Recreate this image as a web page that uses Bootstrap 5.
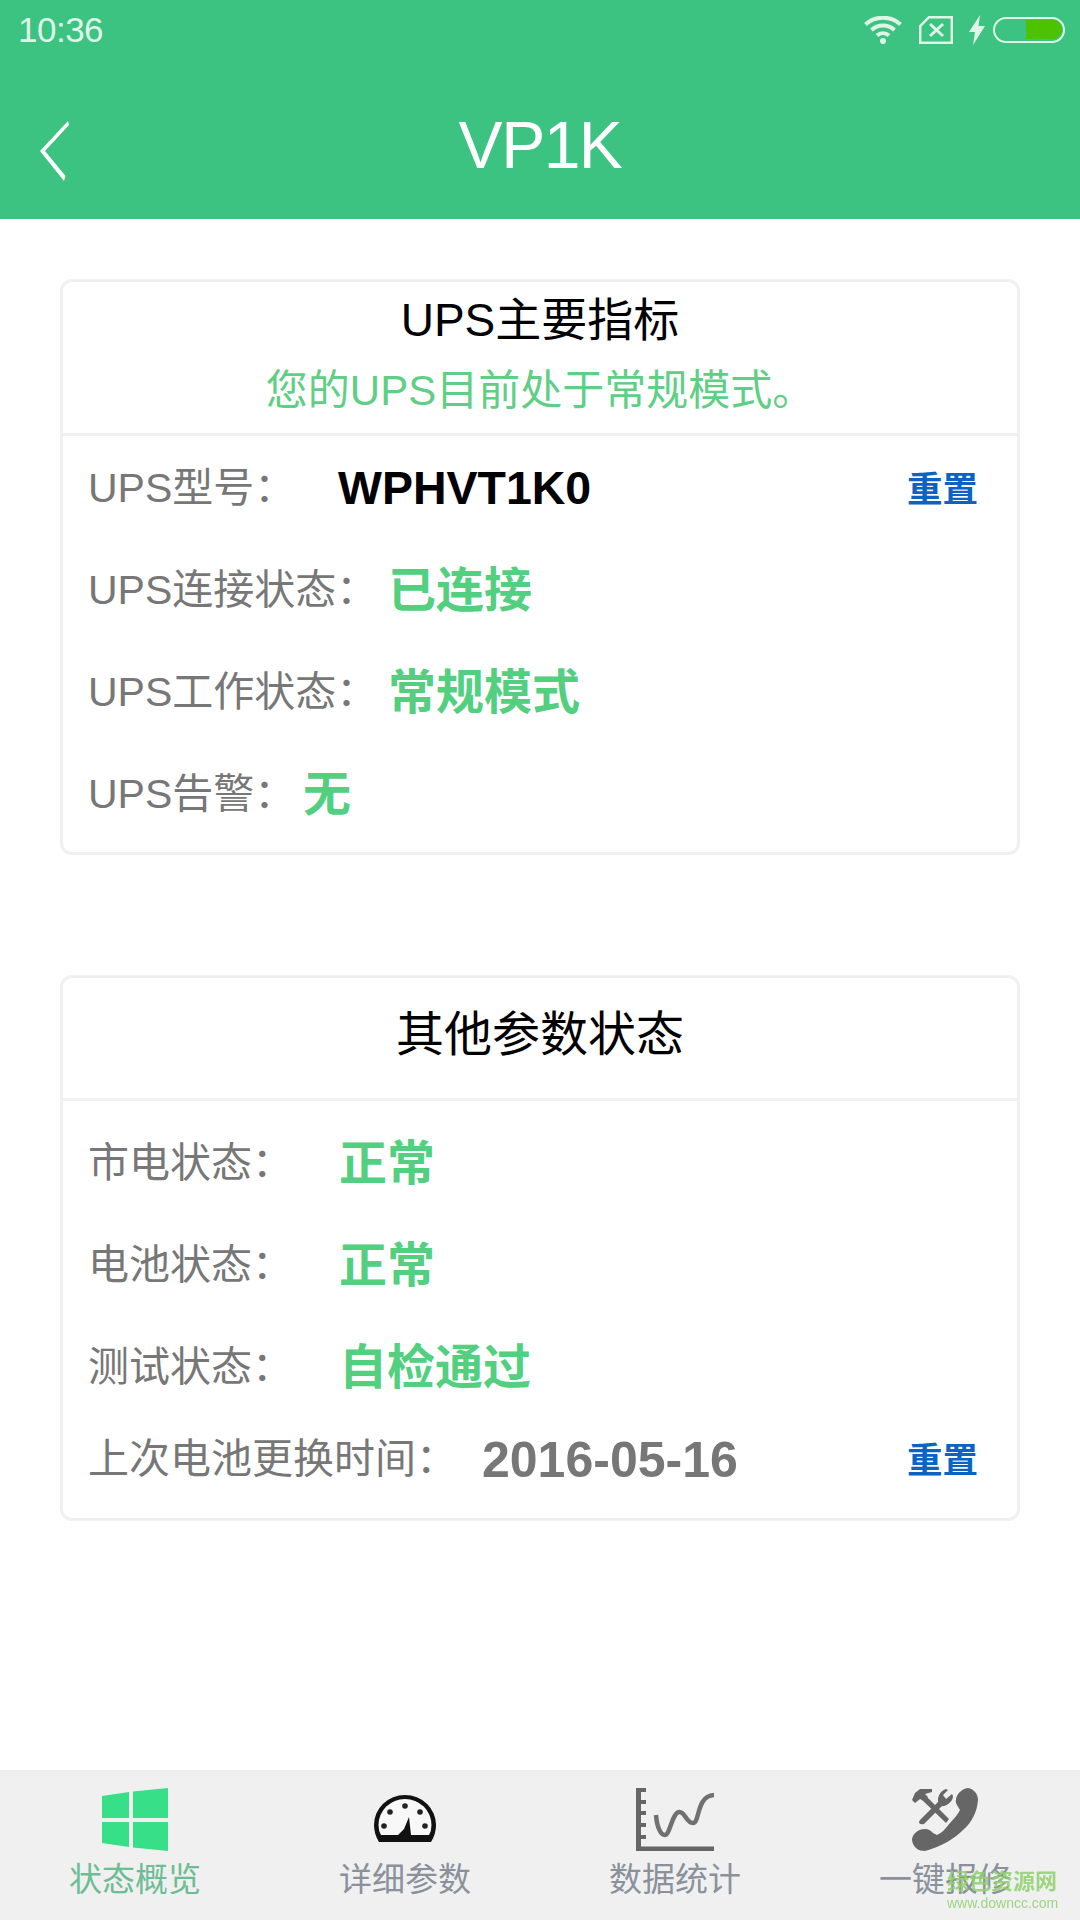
<!DOCTYPE html>
<html lang="zh">
<head>
  <meta charset="UTF-8" />
  <meta name="viewport" content="width=device-width, initial-scale=1" />
  <title>VP1K</title>
  <link href="https://cdn.jsdelivr.net/npm/bootstrap@5.3.3/dist/css/bootstrap.min.css" rel="stylesheet" />
  <style>
    body {
      width: 1080px;
      min-height: 1920px;
      font-family: "Liberation Sans", "Noto Sans CJK SC", sans-serif;
      background: #fff;
    }
    .app-head { height: 219px; background: #3dc381; color: #fff; }
    .status-row { height: 60px; padding: 0 15px 0 18px; }
    .clock { font-size: 35px; color: #dff5ea; letter-spacing: -.5px; }
    .wifi-icon { margin-right: 1px; }
    .title-row { height: 159px; padding-top: 10px; }
    .side-slot { width: 200px; padding-left: 39px; }
    .back-slot { padding-top: 13px; }
    .app-title { font-size: 66px; line-height: 1; letter-spacing: -1.5px; }
    .panel { margin: 0 60px; border: 3px solid #f0f0f0; border-radius: 12px; }
    .panel-top { margin-top: 60px; height: 576px; }
    .panel-next { margin-top: 120px; height: 546px; }
    .panel-head { border-bottom: 3px solid #f0f0f0; text-align: center; color: #000; }
    .head-a { height: 154px; padding-top: 9px; }
    .head-b { height: 123px; padding-top: 28px; }
    .head-title { font-size: 46px; line-height: 58px; }
    .head-title-wide { font-size: 48px; line-height: 58px; }
    .head-sub { font-size: 42px; line-height: 58px; margin-top: 13px; color: #5fcf85; }
    .panel-rows { padding: 2px 39px 0 25px; }
    .panel-rows-low { padding-top: 12px; }
    .info-row { height: 102px; }
    .info-row.last-row { height: 82px; }
    .lbl { font-size: 41px; color: #777; white-space: nowrap; }
    .w-model { width: 250px; }
    .w-state { width: 300px; }
    .w-alarm { width: 215px; }
    .w-plain { width: 251px; }
    .w-swap { width: 394px; }
    .val { font-size: 48px; font-weight: 700; color: #52cf7f; line-height: 1; }
    .val-model { font-size: 46.5px; font-weight: 700; color: #000; line-height: 1; margin-top: -2px; }
    .val-date { font-size: 50px; font-weight: 700; color: #777; line-height: 1; }
    .reset-link { font-size: 35.5px; font-weight: 700; color: #0b63c4; text-decoration: none; margin-top: 4px; }
    .tab-bar { position: relative; height: 150px; background: #f0f0f0; }
    .tab-item { width: 270px; padding-top: 18px; }
    .tab-icon { height: 63px; filter: blur(.5px); }
    .tab-text { font-size: 33px; line-height: 40px; margin-top: 9px; color: #8a919c; }
    .tab-on { color: #6dbd94; }
    .site-mark { position: absolute; left: 947px; top: 101px; color: #8fd16f; line-height: 1; opacity: .85; }
    .site-name { font-size: 22px; font-weight: 700; }
    .site-url { font-size: 14px; margin-top: 3px; }
  </style>
</head>
<body class="d-flex flex-column">

<header class="app-head">
  <div class="status-row d-flex align-items-center justify-content-between">
    <span class="clock">10:36</span>
    <div class="d-flex align-items-center">
      <svg class="wifi-icon" width="38" height="28" viewBox="0 0 38 28" fill="none" stroke="#dff5ea" stroke-width="4">
        <path d="M1.500 8.500C11 -0.500 27 -0.500 36.500 8.500" />
        <path d="M7.500 14C14 8 24 8 30.500 14" />
        <path d="M13 19.500C16.500 16.500 21.500 16.500 25 19.500" />
        <circle cx="19" cy="25" r="3" fill="#dff5ea" stroke="none" />
      </svg>
      <svg class="ms-3" width="34" height="28" viewBox="0 0 34 28" fill="none" stroke="#dff5ea" stroke-width="2.500">
        <path d="M10 1.200H32.800V26.800H1.200V10Z" />
        <path d="M11 8L24 20M24 8L11 20" stroke-width="3" />
      </svg>
      <svg class="ms-3" width="16" height="30" viewBox="0 0 16 30" fill="#dff5ea">
        <path d="M11 0L0 17H6L4 30L16 11H9.500Z" />
      </svg>
      <svg class="ms-2" width="72" height="26" viewBox="0 0 72 26">
        <rect x="1" y="1" width="70" height="24" rx="12" fill="none" stroke="#dff5ea" stroke-width="2" />
        <path d="M33 3H57A10 10 0 0 1 69 13A10 10 0 0 1 57 22H33Z" fill="#4cc200" />
      </svg>
    </div>
  </div>
  <div class="title-row d-flex align-items-center justify-content-between">
    <div class="side-slot back-slot">
      <svg class="d-block" width="30" height="60" viewBox="0 0 30 60">
        <path d="M29 0L1 30L25 60L26.500 55L6 30L30 4Z" fill="#fff" />
      </svg>
    </div>
    <div class="app-title">VP1K</div>
    <div class="side-slot"></div>
  </div>
</header>

<main class="flex-grow-1">
  <section class="panel panel-top">
    <div class="panel-head head-a">
      <div class="head-title">UPS主要指标</div>
      <div class="head-sub">您的UPS目前处于常规模式。</div>
    </div>
    <div class="panel-rows">
      <div class="info-row d-flex align-items-center">
        <span class="lbl w-model">UPS型号：</span>
        <span class="val-model">WPHVT1K0</span>
        <a class="reset-link ms-auto" href="#">重置</a>
      </div>
      <div class="info-row d-flex align-items-center">
        <span class="lbl w-state">UPS连接状态：</span>
        <span class="val">已连接</span>
      </div>
      <div class="info-row d-flex align-items-center">
        <span class="lbl w-state">UPS工作状态：</span>
        <span class="val">常规模式</span>
      </div>
      <div class="info-row d-flex align-items-center">
        <span class="lbl w-alarm">UPS告警：</span>
        <span class="val">无</span>
      </div>
    </div>
  </section>

  <section class="panel panel-next">
    <div class="panel-head head-b">
      <div class="head-title-wide">其他参数状态</div>
    </div>
    <div class="panel-rows panel-rows-low">
      <div class="info-row d-flex align-items-center">
        <span class="lbl w-plain">市电状态：</span>
        <span class="val">正常</span>
      </div>
      <div class="info-row d-flex align-items-center">
        <span class="lbl w-plain">电池状态：</span>
        <span class="val">正常</span>
      </div>
      <div class="info-row d-flex align-items-center">
        <span class="lbl w-plain">测试状态：</span>
        <span class="val">自检通过</span>
      </div>
      <div class="info-row last-row d-flex align-items-center">
        <span class="lbl w-swap">上次电池更换时间：</span>
        <span class="val-date">2016-05-16</span>
        <a class="reset-link ms-auto" href="#">重置</a>
      </div>
    </div>
  </section>
</main>

<footer class="tab-bar d-flex">
  <div class="tab-item d-flex flex-column align-items-center">
    <svg class="tab-icon" width="66" height="63" viewBox="0 0 66 63" fill="#36df88">
      <path d="M0 8L27 4V30H0Z" />
      <path d="M31 3.500L66 0V30H31Z" />
      <path d="M0 34H27V59L0 55Z" />
      <path d="M31 34H66V63L31 59.500Z" />
    </svg>
    <span class="tab-text tab-on">状态概览</span>
  </div>
  <div class="tab-item d-flex flex-column align-items-center">
    <svg class="tab-icon" width="64" height="63" viewBox="0 0 64 63">
      <path d="M1 37A31 30 0 0 1 63 37Q63 46 58 54H6Q1 46 1 37Z" fill="#111" />
      <path d="M5.500 37A26.500 26 0 0 1 58.500 37Q58.500 43 56 47H8Q5.500 43 5.500 37Z" fill="#f8f8f8" />
      <path d="M25 47L31 41L36 29L38 47Z" fill="#111" />
      <g fill="#222">
        <circle cx="11" cy="38" r="2.800" />
        <circle cx="17" cy="24" r="2.800" />
        <circle cx="32" cy="18" r="2.800" />
        <circle cx="47" cy="24" r="2.800" />
        <circle cx="52" cy="38" r="2.800" />
      </g>
    </svg>
    <span class="tab-text">详细参数</span>
  </div>
  <div class="tab-item d-flex flex-column align-items-center">
    <svg class="tab-icon" width="78" height="63" viewBox="0 0 78 63" fill="none" stroke="#666">
      <path d="M2.500 0V61H78" stroke-width="5" />
      <path d="M4 2H10M4 14H10M4 25H10M4 37H10M4 49H10" stroke-width="4" />
      <path d="M20 27C21 40 25 47 29 47C34 47 36 25 43 24C49 23 50 35 57 35C64 35 60 8 78 7" stroke="#707070" stroke-width="4.500" />
    </svg>
    <span class="tab-text">数据统计</span>
  </div>
  <div class="tab-item d-flex flex-column align-items-center">
    <svg class="tab-icon" width="66" height="63" viewBox="0 0 66 63" fill="#666">
      <path d="M56 0C62 1 66 6 66 12C65 24 60 34 51 42C43 50 31 58 13 63C7 63 1 60 0 52C0 47 5 41 13 41C17 41 19 43 21 45L25 47C30 45 34 40 38 35C42 31 46 26 48 22C45 17 43 14 44 12C44 7 49 1 56 0Z" />
      <path d="M0 12L3 5L8 1H20V4L13 6L16 9L12 13L8 11L3 15Z" />
      <path d="M7 5L9 3L37 31L34 35L6 8Z" />
      <path d="M8 32L28 12L32 16L12 36Q9 37 7 35Q7 33 8 32Z" />
      <path d="M27 16C24 10 28 3 34 1L36 2L31 7L34 11L40 6L41 8C41 14 34 19 29 18Z" />
    </svg>
    <span class="tab-text">一键报修</span>
  </div>
  <div class="site-mark">
    <div class="site-name">绿色资源网</div>
    <div class="site-url">www.downcc.com</div>
  </div>
</footer>

<script src="https://cdn.jsdelivr.net/npm/bootstrap@5.3.3/dist/js/bootstrap.bundle.min.js"></script>
</body>
</html>
